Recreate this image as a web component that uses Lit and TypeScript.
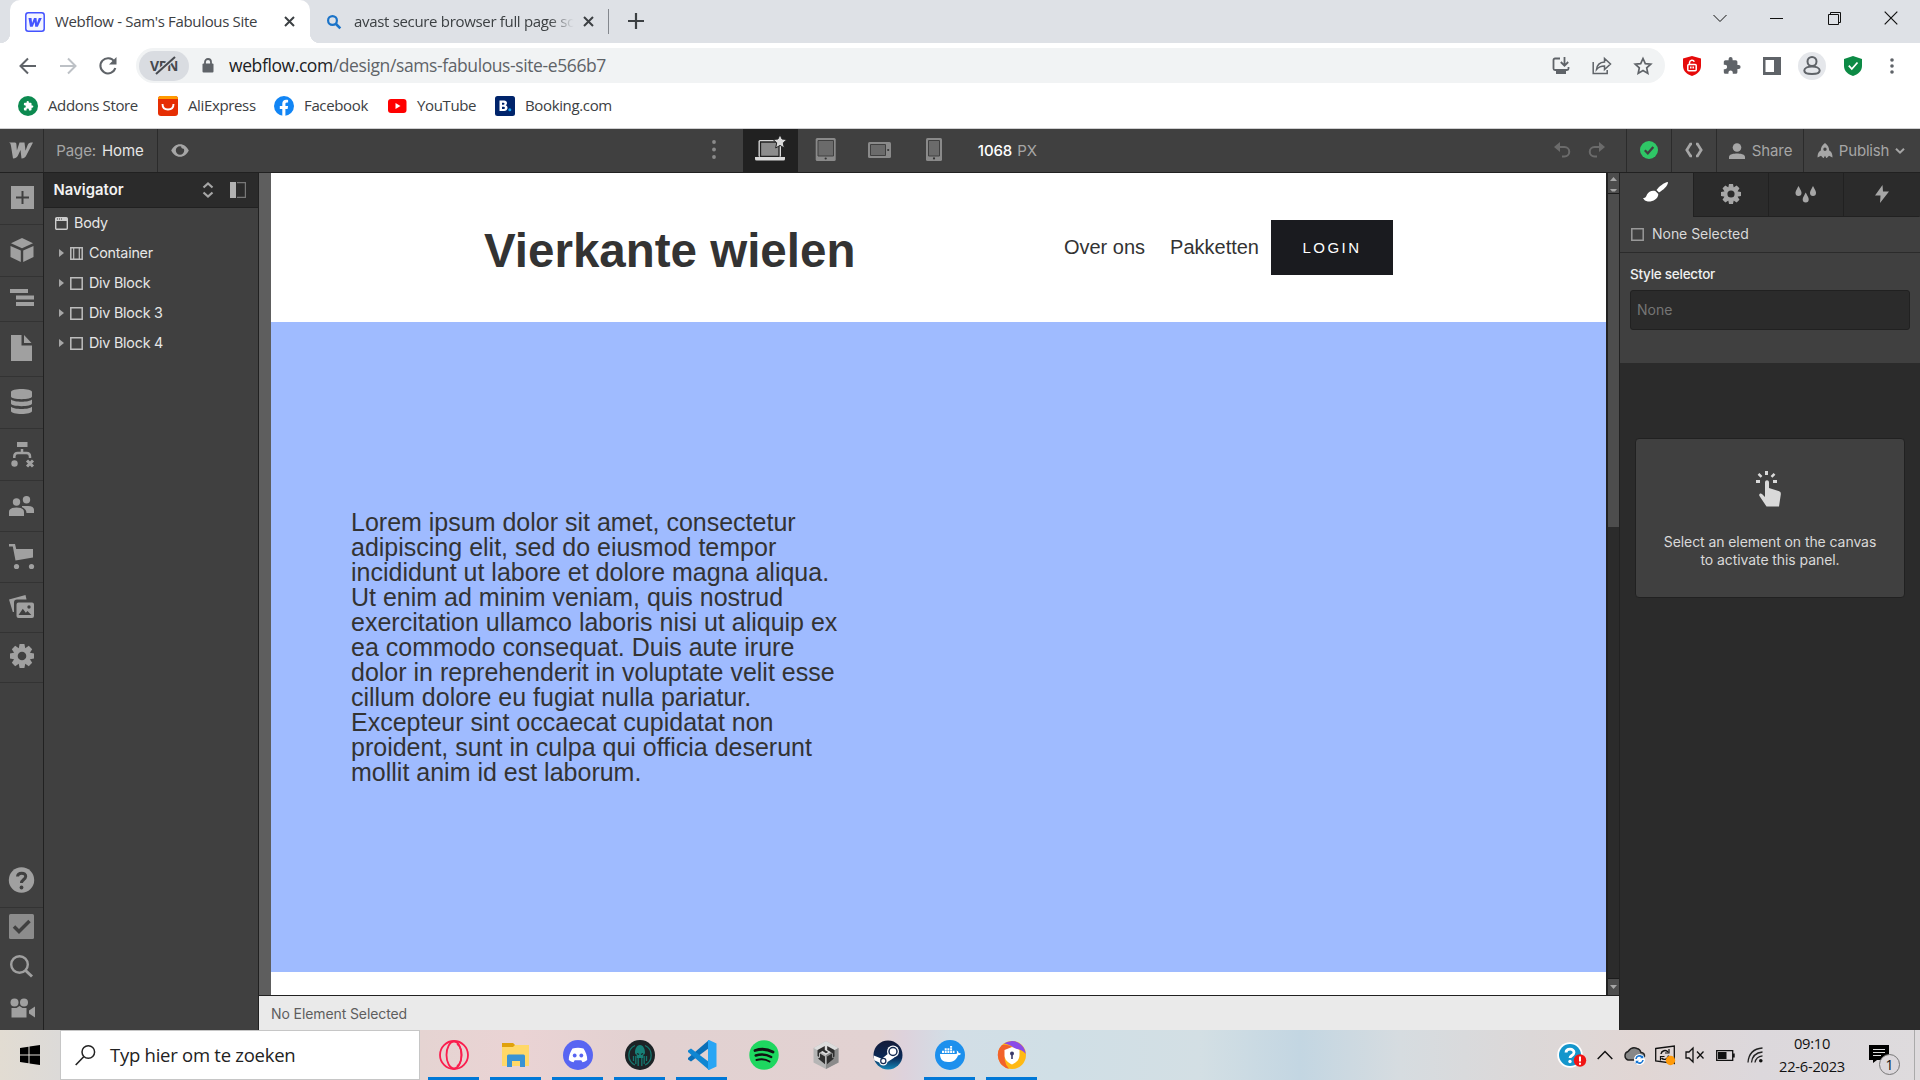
import { LitElement, html, svg, css } from "lit";
import { customElement } from "lit/decorators.js";

const ic = (w: number, h: number, body: unknown, cls = "") =>
  html`<svg class="ic ${cls}" width=${w} height=${h} viewBox="0 0 ${w} ${h}">${body}</svg>`;

const gear = (s: number, hole: string) => svg`
  <g transform="translate(${s / 2} ${s / 2}) scale(${s / 24})" fill="currentColor">
    ${[0, 45, 90, 135].map((a) => svg`<path transform="rotate(${a})" d="M-2.400-12h4.800l1 5h-6.800zM-2.400 12h4.800l1-5h-6.800z"/>`)}
    <circle r="8.300"/><circle r="4.300" fill=${hole}/>
  </g>`;

const puzzle = svg`<path fill="currentColor" d="M20.500 11H19V7a2 2 0 0 0-2-2h-4V3.500a2.500 2.500 0 0 0-5 0V5H4a2 2 0 0 0-2 2v3.800h1.500a2.700 2.700 0 0 1 0 5.400H2V20a2 2 0 0 0 2 2h3.800v-1.500a2.700 2.700 0 0 1 5.400 0V22H17a2 2 0 0 0 2-2v-4h1.500a2.500 2.500 0 0 0 0-5z"/>`;

@customElement("browser-chrome")
export class BrowserChrome extends LitElement {
  static styles = css`
    :host { display: flex; flex-direction: column; height: 129px; background: #fff; font-family: "Open Sans", "Noto Sans", sans-serif; color: #3c4043; box-sizing: border-box; border-bottom: 1px solid #cfcfd1; }
    .ic { display: block; flex: none; overflow: visible; }
    .strip { height: 43px; background: #dee1e6; display: flex; align-items: stretch; flex: none; }
    .tab { width: 300px; margin-left: 10px; box-sizing: border-box; background: #fff; border-radius: 10px 10px 0 0; display: flex; align-items: center; padding: 0 15px 0 15px; position: relative; }
    .tab::before, .tab::after { content: ""; position: absolute; bottom: 0; width: 10px; height: 10px; }
    .tab::before { left: -10px; background: radial-gradient(circle at 0 0, transparent 10px, #fff 10.500px); }
    .tab::after { right: -10px; background: radial-gradient(circle at 100% 0, transparent 10px, #fff 10.500px); }
    .tab.idle { background: none; padding: 0 14px 0 17px; margin-left: 0; width: 298px; }
    .tab.idle::before, .tab.idle::after { display: none; }
    .title { font-size: 15px; line-height: 20px; white-space: nowrap; flex: 1; margin: 0 12px 2px 10px; letter-spacing: -0.330px; }
    .idle .title { margin: 0 7px 2px 13px; letter-spacing: -0.320px; -webkit-mask-image: linear-gradient(to right, #000 88%, transparent 99%); mask-image: linear-gradient(to right, #000 88%, transparent 99%); }
    .sep { width: 1px; height: 25px; background: #83878d; align-self: center; }
    .plus { margin: 13px 0 0 19px; }
    .grow { flex: 1; }
    .win { display: flex; align-items: center; padding: 0 22px 7px 0; gap: 43px; color: #111; }
    .bar { height: 43px; display: flex; align-items: center; padding-left: 18px; margin-top: 1px; color: #5f6368; flex: none; }
    .bar > .ic { margin-right: 20px; }
    .omni { width: 1529px; height: 35px; border-radius: 18px; background: #f1f3f4; display: flex; align-items: center; box-sizing: border-box; padding: 0 13px 0 3px; margin-left: -2px; }
    .vpn { width: 50px; height: 30px; border-radius: 15px; background: #d9dce1; display: flex; align-items: center; justify-content: center; position: relative; font-size: 14px; font-weight: 700; letter-spacing: -0.500px; color: #46494e; }
    .slash { position: absolute; left: 13px; top: 5px; }
    .lock { margin: 0 15px 0 13px; }
    .url { font-size: 17.500px; line-height: 24px; letter-spacing: -0.400px; white-space: nowrap; color: #5f6368; margin-bottom: 1px; }
    .url b { font-weight: 400; color: #202124; }
    .acts { display: flex; align-items: center; gap: 22px; }
    .exts { display: flex; align-items: center; gap: 22px; padding-left: 18px; }
    .exts > :last-child { margin-left: -1px; }
    .ava { width: 28px; height: 28px; border-radius: 50%; background: #e5e7eb; display: flex; align-items: center; justify-content: center; margin: 0 -4px 0 -5px; }
    .marks { display: flex; align-items: center; height: 38px; padding-left: 18px; }
    .mark { display: flex; align-items: center; gap: 10px; font-size: 15px; letter-spacing: -0.360px; height: 24px; white-space: nowrap; box-sizing: border-box; }
    .m0 { width: 140px; } .m1 { width: 116px; } .m2 { width: 114px; } .m3 { width: 107px; }
    .mark span { margin-bottom: 2px; }
  `;
  render() {
    const x = svg`<path d="M1 1l9 9M10 1l-9 9" stroke="#3c4043" stroke-width="2" fill="none"/>`;
    return html`
      <div class="strip">
        <div class="tab">
          ${ic(20, 20, svg`<rect x=".8" y=".8" width="18.400" height="18.400" rx="2.500" fill="#f4f5ff" stroke="#4353ff" stroke-width="1.500"/><path fill="#4353ff" d="M3.500 6h3l.6 5L9 6h2.500l.5 5 1.800-5h3l-4 8.800h-2.600L9.700 10l-2 4.800H5z"/>`)}
          <span class="title">Webflow - Sam's Fabulous Site</span>
          ${ic(11, 11, x)}
        </div>
        <div class="tab idle">
          ${ic(14, 14, svg`<circle cx="5.500" cy="5.500" r="4.400" fill="none" stroke="#1a73c8" stroke-width="2.200"/><path d="M9 9l4.300 4.300" stroke="#1a73c8" stroke-width="2.600"/>`)}
          <span class="title">avast secure browser full page sc</span>
          ${ic(11, 11, x)}
        </div>
        <div class="sep"></div>
        ${ic(16, 16, svg`<path d="M8 0v16M0 8h16" stroke="#3c4043" stroke-width="2.200"/>`, "plus")}
        <div class="grow"></div>
        <div class="win">
          ${ic(14, 14, svg`<path d="M.5 4l6.500 6.500L13.500 4" stroke="currentColor" fill="none"/>`)}
          ${ic(14, 14, svg`<path d="M0 7.500h13" stroke="currentColor"/>`)}
          ${ic(14, 14, svg`<path d="M1.500 3.500h10v10h-10zM3.500 3V1.500h10v10H12" stroke="currentColor" fill="none"/>`)}
          ${ic(14, 14, svg`<path d="M.7 .7l12.600 12.600M13.300 .7L.7 13.300" stroke="currentColor" stroke-width="1.200"/>`)}
        </div>
      </div>
      <div class="bar">
        ${ic(20, 20, svg`<path d="M18 10H3M10 2.500L2.500 10l7.500 7.500" fill="none" stroke="currentColor" stroke-width="2"/>`)}
        ${ic(20, 20, svg`<path d="M2 10h15M10 2.500l7.500 7.500-7.500 7.500" fill="none" stroke="#bdc1c6" stroke-width="2"/>`)}
        ${ic(20, 20, svg`<path d="M16.300 5.500A7.600 7.600 0 1 0 17.300 12" fill="none" stroke="currentColor" stroke-width="2.100"/><path d="M18.500 1v7.500H11z" fill="currentColor"/>`)}
        <div class="omni">
          <div class="vpn">VPN${ic(26, 20, svg`<path d="M3 19L23 1" stroke="#d9dce1" stroke-width="4.500"/><path d="M4 18L23 1" stroke="#46494e" stroke-width="2"/>`, "slash")}</div>
          ${ic(12, 15, svg`<rect x="0.500" y="5.500" width="11" height="9" rx="1" fill="currentColor"/><path d="M3 6V4a3 3 0 0 1 6 0v2" fill="none" stroke="currentColor" stroke-width="1.800"/>`, "lock")}
          <span class="url"><b>webflow.com</b>/design/sams-fabulous-site-e566b7</span>
          <div class="grow"></div>
          <div class="acts">
            ${ic(18, 18, svg`<path d="M8 1.500H3a1.500 1.500 0 0 0-1.500 1.500v8.500A1.500 1.500 0 0 0 3 13h12a1.500 1.500 0 0 0 1.500-1.500V10" fill="none" stroke="currentColor" stroke-width="1.800"/><path d="M4 14h10v3H4z" fill="currentColor"/><path d="M12.500 0v8M8.800 5l3.700 3.700L16.200 5" fill="none" stroke="currentColor" stroke-width="1.800"/>`)}
            ${ic(20, 18, svg`<path d="M1.200 5v11.500h14V13" fill="none" stroke="currentColor" stroke-width="1.500"/><path d="M4.500 12.500C5 8 8 5.300 12.500 5V1.500l6 5.500-6 5.500V9C9 9 6.500 10 4.500 12.500z" fill="none" stroke="currentColor" stroke-width="1.500"/>`)}
            ${ic(18, 18, svg`<path d="M9 1.500l2.300 5.100 5.500.6-4.100 3.700 1.100 5.500L9 13.600l-4.800 2.800 1.100-5.500L1.200 7.200l5.500-.6z" fill="none" stroke="currentColor" stroke-width="1.700"/>`)}
          </div>
        </div>
        <div class="exts">
          ${ic(18, 20, svg`<path d="M9 0l9 2.500V10c0 5-4 8.500-9 10-5-1.500-9-5-9-10V2.500z" fill="#e60a0a"/><rect x="4.800" y="8.500" width="8.400" height="6.200" rx="1" fill="none" stroke="#fff" stroke-width="1.500"/><path d="M6.500 8V6.500a2.500 2.500 0 0 1 4.800-.7M7.800 10.500v2M10.200 10.500v2" fill="none" stroke="#fff" stroke-width="1.500"/>`)}
          ${ic(18, 18, svg`<g transform="scale(.8) translate(-1 -1)">${puzzle}</g>`)}
          ${ic(18, 18, svg`<path d="M0 0h18v18H0z" fill="currentColor"/><path d="M2.500 3h8.500v12H2.500z" fill="#fff"/>`)}
          <div class="ava">${ic(18, 19, svg`<circle cx="9" cy="5.500" r="4.500" fill="none" stroke="currentColor" stroke-width="2"/><path d="M1.300 14.500c0-2.500 3.500-4 7.700-4s7.700 1.500 7.700 4S14 18 9 18s-7.700-1-7.700-3.500z" fill="none" stroke="currentColor" stroke-width="2"/>`)}</div>
          ${ic(18, 20, svg`<path d="M9 0l9 3v7c0 5-4 8.500-9 10-5-1.500-9-5-9-10V3z" fill="#0c8a45"/><path d="M4.800 9.700l3 3.300 5.700-6.500" fill="none" stroke="#fff" stroke-width="1.800"/>`)}
          ${ic(18, 18, svg`<g fill="currentColor"><circle cx="9" cy="3" r="1.800"/><circle cx="9" cy="9" r="1.800"/><circle cx="9" cy="15" r="1.800"/></g>`)}
        </div>
      </div>
      <div class="marks">
        <div class="mark m0">${ic(20, 20, svg`<circle cx="10" cy="10" r="10" fill="#0c8a50"/><g transform="translate(5 4.500) scale(.45)" color="#fff">${puzzle}</g>`)}<span>Addons Store</span></div>
        <div class="mark m1">${ic(20, 20, svg`<rect width="20" height="20" rx="3" fill="#e62e04"/><path d="M0 3a3 3 0 0 1 3-3h14a3 3 0 0 1 3 3z" fill="#ff9a00"/><path d="M4.500 8c0 3.500 2.300 5.500 5.500 5.500s5.500-2 5.500-5.500" fill="none" stroke="#fff" stroke-width="1.900"/>`)}<span>AliExpress</span></div>
        <div class="mark m2">${ic(20, 20, svg`<circle cx="10" cy="10" r="10" fill="#1185f5"/><path d="M8.300 20v-7H5.800v-3h2.500V7.800c0-2.600 1.500-4 3.800-4 1 0 2 .2 2 .2v2.500h-1.200c-1.200 0-1.500.8-1.500 1.500v2h2.700l-.5 3h-2.200v7z" fill="#fff"/>`)}<span>Facebook</span></div>
        <div class="mark m3">${ic(19, 14, svg`<rect width="18.500" height="14" rx="3" fill="#f00"/><path d="M7.500 4v6l5-3z" fill="#fff"/>`)}<span>YouTube</span></div>
        <div class="mark">${ic(20, 20, svg`<rect width="20" height="20" rx="2.500" fill="#00246b"/><path d="M4.500 4.500h4.700c3.300 0 3.500 4 1.500 4.800 2.800.8 2.500 5.700-1.500 5.700H4.500zM7 6.700v2h1.500c1.300 0 1.300-2 0-2zM7 10.700V13h1.800c1.500 0 1.500-2.300 0-2.300z" fill="#fff" fill-rule="evenodd"/><circle cx="14.800" cy="13.700" r="1.500" fill="#1ba5f0"/>`)}<span>Booking.com</span></div>
      </div>`;
  }
}

@customElement("designer-bar")
export class DesignerBar extends LitElement {
  static styles = css`
    :host { display: flex; height: 44px; box-sizing: border-box; background: #404040; border-bottom: 1px solid #212121; font: 15px/20px Inter, sans-serif; letter-spacing: -0.100px; color: #a6a6a6; }
    .ic { display: block; flex: none; overflow: visible; }
    .cell { display: flex; align-items: center; justify-content: center; box-sizing: border-box; border-right: 1px solid #2b2b2b; }
    .logo { width: 44px; padding: 0 2px 1px 0; }
    .page { width: 114px; gap: 6px; padding-right: 1px; } .page b { font-weight: 400; color: #e6e6e6; }
    .eye { width: 44px; border: 0; }
    .grow { flex: 1; }
    .dots { width: 60px; margin-left: 481px; border: 0; color: #8a8a8a; padding: 0 0 2px 2px; }
    .dev { width: 54.700px; border: 0; color: #8a8a8a; padding-bottom: 2px; }
    .on { background: #212121; color: #d9d9d9; padding-bottom: 5px; }
    .size { border: 0; padding-left: 16px; gap: 5px; } .size b { font-weight: 500; color: #fff; }
    .hist { gap: 19px; color: #6b6b6b; padding: 0 9px 2px 0; width: 85px; }
    .sq { width: 45px; padding-bottom: 1px; }
    .share { width: 87px; gap: 7px; padding-left: 1px; }
    .pub { width: 116px; border: 0; gap: 6px; letter-spacing: -0.200px; padding-right: 2px; }
  `;
  render() {
    return html`
      <div class="cell logo">${ic(24, 17, svg`<path fill="currentColor" d="M0 .5h5.800c1.500 0 1.500 1 1.600 2l.5 6L10.500.5h5l1 8.300L18.700 3C19.500 1 20.600.5 24 .5L17.500 13c-1 2-2.200 3.500-5 3.500l-1-8.500-2.300 5c-1 2-2.400 3.500-5.200 3.500L2 4C1.700 2 1.300.8 0 .5z"/>`)}</div>
      <div class="cell page">Page: <b>Home</b></div>
      <div class="cell eye">${ic(18, 13, svg`<path fill="currentColor" fill-rule="evenodd" d="M9 .2c4 0 7 2.600 8.800 6.300C16 10.200 13 12.800 9 12.800S2 10.200.2 6.500C2 2.800 5 .2 9 .2zM9 2.300a4.200 4.200 0 1 0 4.200 4.200c0-.6-.1-1.200-.4-1.800a2 2 0 0 1-2.600-2.200A4 4 0 0 0 9 2.300z"/>`)}</div>
      <div class="cell dots">${ic(4, 19, svg`<g fill="currentColor"><circle cx="2" cy="2" r="1.900"/><circle cx="2" cy="9.500" r="1.900"/><circle cx="2" cy="17" r="1.900"/></g>`)}</div>
      <div class="cell dev on">${ic(31, 26, svg`<rect x="3.500" y="5" width="22.500" height="17" rx="1.500" fill="currentColor"/><path d="M5.500 7h18.500v14.500H5.500z" fill="#8c8c8c" stroke="#212121" stroke-width="1.300"/><path d="M0 22h30v2a1.500 1.500 0 0 1-1.500 1.500h-27A1.500 1.500 0 0 1 0 24z" fill="currentColor"/><path d="M25 -.5l2 4.500 5 .5-3.700 3.300 1 5.200-4.300-2.600-4.300 2.600 1-5.200L18 4.500l5-.5z" fill="currentColor" stroke="#212121" stroke-width="1"/>`)}</div>
      <div class="cell dev">${ic(21, 23, svg`<rect x=".7" y="0" width="20" height="23" rx="1.500" fill="#8a8a8a"/><path d="M3 2.500h15.500v15.500H3z" fill="#6b6b6b" stroke="#404040"/><circle cx="10.700" cy="20.500" r="1.100" fill="#333"/>`)}</div>
      <div class="cell dev">${ic(23, 16, svg`<rect width="23" height="16" rx="1.500" fill="#8a8a8a"/><path d="M2.500 2.500h15v11h-15z" fill="#6b6b6b" stroke="#404040"/><circle cx="20.200" cy="8" r="1.100" fill="#333"/>`)}</div>
      <div class="cell dev">${ic(16, 23, svg`<rect width="16" height="23" rx="1.500" fill="#8a8a8a"/><path d="M2.500 2.500h11v15.500h-11z" fill="#6b6b6b" stroke="#404040"/><circle cx="8" cy="20.400" r="1.100" fill="#333"/>`)}</div>
      <div class="cell size"><b>1068</b> PX</div>
      <div class="grow"></div>
      <div class="cell hist">
        ${ic(16, 16, svg`<path d="M2 5h8.500a4.700 4.700 0 0 1 0 9.500H8" fill="none" stroke="currentColor" stroke-width="2"/><path d="M6 0v10L0 5z" fill="currentColor"/>`)}
        ${ic(16, 16, svg`<path d="M14 5H5.500a4.700 4.700 0 0 0 0 9.500H8" fill="none" stroke="currentColor" stroke-width="2"/><path d="M10 0v10l6-5z" fill="currentColor"/>`)}
      </div>
      <div class="cell sq">${ic(18, 18, svg`<circle cx="9" cy="9" r="9" fill="#2fc666"/><path d="M4.800 9.300l3 3L13.300 6" fill="none" stroke="#404040" stroke-width="2.300"/>`)}</div>
      <div class="cell sq">${ic(18, 14, svg`<path d="M7 1H5.500L1.800 7l3.700 6H7M11 1h1.500l3.700 6-3.700 6H11" fill="none" stroke="currentColor" stroke-width="2.700"/>`)}</div>
      <div class="cell share">${ic(16, 16, svg`<circle cx="8" cy="4.500" r="4.300" fill="currentColor"/><path d="M0 16v-2c0-3 5-3.500 8-3.500s8 .5 8 3.500v2z" fill="currentColor"/>`)}Share</div>
      <div class="cell pub">${ic(16, 15, svg`<path fill="currentColor" fill-rule="evenodd" d="M8 0c3 2 4.200 5 4.200 7.500 2.300 1 3.300 3.500 3.300 7L12 12.800 9.800 15h-.5L8 12.800 6.700 15h-.5L4 12.800.5 14.500c0-3.500 1-6 3.300-7C3.800 5 5 2 8 0zm0 4.500a1.700 1.700 0 1 0 0 3.400 1.700 1.700 0 0 0 0-3.400z"/>`)}Publish${ic(10, 6, svg`<path d="M1 .7l4 4 4-4" fill="none" stroke="currentColor" stroke-width="2"/>`)}</div>`;
  }
}

@customElement("tool-rail")
export class ToolRail extends LitElement {
  static styles = css`
    :host { display: flex; flex-direction: column; width: 44px; box-sizing: border-box; border-right: 1px solid #212121; background: #404040; color: #a0a0a0; }
    .ic { display: block; overflow: visible; }
    .it { display: flex; align-items: center; justify-content: center; box-sizing: border-box; border-bottom: 1px solid #333; padding-bottom: 1px; }
    .nb { border: 0; padding-bottom: 2px; }
    .up { padding-bottom: 3px; }
    .plus { padding: 0 0 2px 2px; }
    .grow { flex: 1; }
    .h52 { height: 52px; } .h51 { height: 51px; } .h50 { height: 50px; } .h49 { height: 49px; } .h45 { height: 45px; } .h55 { height: 55px; } .h38 { height: 38px; } .h42 { height: 42px; }
  `;
  render() {
    return html`
      <div class="it h52 plus">${ic(23, 23, svg`<path d="M0 0h23v23H0z" fill="currentColor"/><path d="M11.500 5v13M5 11.500h13" stroke="#404040" stroke-width="2"/>`)}</div>
      <div class="it h52">${ic(24, 24, svg`<g fill="currentColor"><path d="M12 0l11 5.300-11 5-11-5z"/><path d="M.5 8l10.300 4.500V24L.5 19zM23.500 8l-10.300 4.500V24l10.300-5z"/></g>`)}</div>
      <div class="it h45 up">${ic(24, 17, svg`<g fill="currentColor"><path d="M0 0h18v4H0zM6 6.500h18v4H6zM6 13h18v4H6z"/></g>`)}</div>
      <div class="it h55 up">${ic(21, 26, svg`<g fill="currentColor"><path d="M0 0h10.500v10.500H21V26H0z"/><path d="M13 0l7.500 8H13z"/></g>`)}</div>
      <div class="it h52 up">${ic(21, 25, svg`<g fill="currentColor"><path d="M0 3c0-4 21-4 21 0v4.500c0 3.500-21 3.500-21 0z"/><path d="M0 10.500c3 3 18 3 21 0v4c0 3.500-21 3.500-21 0z"/><path d="M0 17.800c3 3 18 3 21 0V22c0 4-21 4-21 0z"/></g>`)}</div>
      <div class="it h52">${ic(22, 25, svg`<g fill="currentColor"><path d="M6 0h10.500v5H6z"/><circle cx="3.500" cy="21.500" r="3.200"/></g><path d="M11 7v4M3.300 16v-1.500q0-3.500 3.500-3.500h8.700q3.500 0 3.500 3.500V16" fill="none" stroke="currentColor" stroke-width="2.500"/><path d="M16 18.500l6 6M22 18.500l-6 6" stroke="currentColor" stroke-width="3"/>`)}</div>
      <div class="it h51">${ic(25, 20, svg`<g fill="currentColor"><circle cx="7.500" cy="6" r="3.700"/><circle cx="17.500" cy="3.800" r="3.700"/><path d="M0 20v-4c0-3 3-4.500 7.500-4.500S15 13 15 16v4zM13 10h6c4 0 6 1.500 6 4v3h-7.500c-.3-3-1.500-4.500-4.500-5.700z"/></g>`)}</div>
      <div class="it h51">${ic(25, 25, svg`<g fill="currentColor"><path d="M0 0h6l1.200 5H24v8.500L6.500 16.500 3.800 2.500H0z"/><circle cx="7.500" cy="22.500" r="2.600"/><circle cx="22.500" cy="22.500" r="2.600"/></g>`)}</div>
      <div class="it h50 up">${ic(25, 23, svg`<g fill="currentColor"><path d="M0 4.500L16.500 0l1 4.500H8q-3 0-3 3V17H3.800z"/><path fill-rule="evenodd" d="M9.500 7.500H23a2 2 0 0 1 2 2V21a2 2 0 0 1-2 2H9.500a2 2 0 0 1-2-2V9.500a2 2 0 0 1 2-2zM9.500 20h12.800l-3.800-4-1.700 1.700-3-4zM20 10.300a1.700 1.700 0 1 0 0 3.400 1.700 1.700 0 0 0 0-3.400z"/></g>`)}</div>
      <div class="it h50 up">${ic(24, 24, gear(24, "#404040"))}</div>
      <div class="grow"></div>
      <div class="it h55">${ic(25, 26, svg`<circle cx="12.500" cy="13" r="12.700" fill="currentColor"/><path d="M8.500 9.500c.3-4.500 8.500-4.500 8.200 0-.1 3-4.200 3-4.200 6.500" fill="none" stroke="#404040" stroke-width="3"/><circle cx="12.500" cy="20.500" r="1.900" fill="#404040"/>`)}</div>
      <div class="it h38 nb">${ic(25, 25, svg`<rect width="25" height="25" rx="1.500" fill="#8c8c8c"/><path d="M5 12.500l5 5 10.500-10.500" fill="none" stroke="#404040" stroke-width="3.500"/>`)}</div>
      <div class="it h42 nb">${ic(23, 22, svg`<circle cx="9.500" cy="9.500" r="8.300" fill="none" stroke="currentColor" stroke-width="2.400"/><path d="M15 15l7 6.500" stroke="currentColor" stroke-width="3"/>`)}</div>
      <div class="it h42 nb">${ic(23, 20, svg`<g fill="currentColor"><circle cx="4.500" cy="4.500" r="4"/><circle cx="14" cy="4.500" r="4"/><path d="M1.500 10h5l3-2 3 2h4v9.500h-15zM19 12.500l6-4v11l-6-4z"/></g>`)}</div>`;
  }
}

@customElement("navigator-panel")
export class NavigatorPanel extends LitElement {
  static styles = css`
    :host { display: flex; flex-direction: column; width: 215px; box-sizing: border-box; border-right: 1px solid #212121; background: #404040; font: 14.300px/20px Inter, sans-serif; color: #e6e6e6; letter-spacing: -0.220px; }
    .ic { display: block; flex: none; }
    .head { height: 35px; box-sizing: border-box; background: #2b2b2b; border-bottom: 1px solid #212121; display: flex; align-items: center; padding: 0 12px 0 9.500px; font-weight: 600; font-size: 14.800px; color: #f2f2f2; letter-spacing: .05px; }
    .head span { flex: 1; }
    .a { margin-right: 16px; }
    .row { height: 30px; display: flex; align-items: center; padding-left: 15px; gap: 6px; }
    .body { padding-left: 11px; }
  `;
  render() {
    const rows = ["Container", "Div Block", "Div Block 3", "Div Block 4"];
    return html`
      <div class="head"><span>Navigator</span>
        ${ic(12, 16, svg`<path d="M1.500 5.500L6 1.500l4.500 4M1.500 10.500l4.500 4 4.500-4" fill="none" stroke="#a6a6a6" stroke-width="2.200"/>`, "a")}
        ${ic(16, 16, svg`<path d="M0 0h6v16H0z" fill="#b0b0b0"/><path d="M7 .6h8.400v14.800H7" fill="none" stroke="#777" stroke-width="1.200"/>`)}
      </div>
      <div class="row body">${ic(13, 13, svg`<rect x=".7" y=".7" width="11.600" height="11.600" rx="1" fill="none" stroke="#ccc" stroke-width="1.400"/><path d="M1 1h11v3H1z" fill="#ccc"/><path d="M2 2h1M4 2h1M6 2h1" stroke="#404040"/>`)}<span>Body</span></div>
      ${rows.map((r, i) => html`<div class="row">
        ${ic(5, 8, svg`<path d="M0 0l5 4-5 4z" fill="#a6a6a6"/>`)}
        ${ic(13, 13, svg`<path d="M.8 .8h11.400v11.400H.8z" fill="none" stroke="#bdbdbd" stroke-width="1.500"/>${i === 0 ? svg`<path d="M3.700 1v11M9.300 1v11" stroke="#bdbdbd" stroke-width="1.200"/>` : ""}`)}
        <span>${r}</span></div>`)}`;
  }
}

@customElement("site-canvas")
export class SiteCanvas extends LitElement {
  static styles = css`
    :host { display: flex; flex-direction: column; width: 1361px; font-family: "Liberation Sans", Arial, sans-serif; color: #333; }
    .main { flex: 1; display: flex; min-height: 0; }
    .gut { width: 12px; background: #5e5e5e; }
    .site { width: 1335px; background: #fff; display: flex; flex-direction: column; }
    .hdr { height: 149px; display: flex; align-items: center; padding: 0 213px 0 213px; flex: none; }
    h1 { margin: 0 auto 0 0; font-size: 47.500px; line-height: 55px; font-weight: 700; padding-top: 5px; }
    .lnk { font-size: 20px; line-height: 25px; margin-right: 25px; }
    .lnk + .lnk { margin-right: 12px; }
    .btn { width: 122px; height: 55px; background: #1a1b1f; color: #fff; font-size: 15px; letter-spacing: 2.500px; display: flex; align-items: center; justify-content: center; box-sizing: border-box; }
    .hero { height: 650px; box-sizing: border-box; background: #9fbbff; flex: none; padding: 188px 80px 0; }
    .hero p { margin: 0; width: 500px; font-size: 25px; line-height: 25px; white-space: pre; }
    .bar { width: 14px; box-sizing: border-box; display: flex; flex-direction: column; background: #2b2b2b; border-left: 2px solid #212121; border-right: 1px solid #212121; flex: none; }
    .up { height: 21px; box-sizing: border-box; background: #4d4d4d; border-bottom: 1px solid #1c1c1c; display: flex; flex-direction: column; align-items: center; justify-content: space-between; padding: 4px 0 1px; }
    .thumb { height: 333px; background: #4d4d4d; }
    .grow { flex: 1; }
    .dn { height: 17px; background: #4d4d4d; border-top: 1px solid #1c1c1c; display: flex; align-items: center; justify-content: center; box-sizing: border-box; }
    .ic { display: block; }
    .stat { height: 35px; box-sizing: border-box; border-top: 1px solid #212121; border-right: 1px solid #212121; background: #eaeaea; display: flex; align-items: center; padding: 2px 0 0 12px; font: 14px/20px Inter, sans-serif; letter-spacing: -0.100px; color: #5e5e5e; }
  `;
  render() {
    const lines = ["Lorem ipsum dolor sit amet, consectetur", "adipiscing elit, sed do eiusmod tempor", "incididunt ut labore et dolore magna aliqua.", "Ut enim ad minim veniam, quis nostrud", "exercitation ullamco laboris nisi ut aliquip ex", "ea commodo consequat. Duis aute irure", "dolor in reprehenderit in voluptate velit esse", "cillum dolore eu fugiat nulla pariatur.", "Excepteur sint occaecat cupidatat non", "proident, sunt in culpa qui officia deserunt", "mollit anim id est laborum."];
    return html`
      <div class="main">
        <div class="gut"></div>
        <div class="site">
          <div class="hdr"><h1>Vierkante wielen</h1><span class="lnk">Over ons</span><span class="lnk">Pakketten</span><div class="btn">LOGIN</div></div>
          <div class="hero"><p>${lines.join("\n")}</p></div>
        </div>
        <div class="bar">
          <div class="up">${ic(7, 4, svg`<path d="M0 4h7L3.500 0z" fill="#a6a6a6"/>`)}${ic(7, 3, svg`<path d="M0 0h7L5 2.500H2z" fill="#a6a6a6"/>`)}</div>
          <div class="thumb"></div><div class="grow"></div>
          <div class="dn">${ic(7, 4, svg`<path d="M0 0h7L3.500 4z" fill="#a6a6a6"/>`)}</div>
        </div>
      </div>
      <div class="stat">No Element Selected</div>`;
  }
}

@customElement("style-panel")
export class StylePanel extends LitElement {
  static styles = css`
    :host { display: flex; flex-direction: column; flex: 1; background: #2b2b2b; font: 14px/18px Inter, sans-serif; color: #d9d9d9; }
    .ic { display: block; overflow: visible; }
    .tabs { display: flex; height: 44px; flex: none; color: #a6a6a6; }
    .tab { width: 75px; box-sizing: border-box; border: solid #212121; border-width: 0 1px 1px 0; display: flex; align-items: center; justify-content: center; padding-bottom: 2px; }
    .on { background: #404040; color: #fff; border-bottom: 0; width: 74px; padding: 0 3px 6px 0; }
    .tab:last-child { border-right: 0; }
    .none { height: 36px; box-sizing: border-box; background: #404040; border-bottom: 1px solid #2b2b2b; display: flex; align-items: center; padding: 0 0 1px 11px; gap: 8px; letter-spacing: -.03px; }
    .sel { height: 110px; box-sizing: border-box; background: #404040; padding: 12px 10px 0; display: flex; flex-direction: column; gap: 7px; color: #f0f0f0; letter-spacing: -0.250px; font-weight: 500; font-size: 13.500px; }
    .inp { height: 40px; box-sizing: border-box; border: 1px solid #212121; border-radius: 3px; background: #2b2b2b; color: #757575; padding: 10px 6px; font-weight: 400; font-size: 14px; letter-spacing: 0; }
    .card { margin: 75px 15px 0; height: 160px; box-sizing: border-box; background: #404040; border: 1px solid #212121; border-radius: 4px; display: flex; flex-direction: column; align-items: center; padding-top: 32px; gap: 26px; text-align: center; letter-spacing: -0.080px; }
    .card .ic { margin-right: 2px; }
  `;
  render() {
    return html`
      <div class="tabs">
        <div class="tab on">${ic(25, 20, svg`<g fill="currentColor"><path d="M25 0c0 4-5 8-9 10.500L13.500 8C16 4.500 21 .5 25 0z"/><path d="M12.300 9l3 3c0 5-6 8-10.500 7.500C2.500 19.200 1 18 0 16c3 0 3-1.500 4-3.500 1.500-3 5-4.500 8.300-3.500z"/></g>`)}</div>
        <div class="tab">${ic(20, 20, gear(20, "#2b2b2b"))}</div>
        <div class="tab">${ic(22, 18, svg`<g fill="currentColor"><path d="M3.500 1c2 4 3 5 3 7a3 3 0 0 1-6 0c0-2 1-3 3-7zM18 1c2 4 3 5 3 7a3 3 0 0 1-6 0c0-2 1-3 3-7zM10.700 7.500c2 4 3 5 3 7a3 3 0 0 1-6 0c0-2 1-3 3-7z"/></g>`)}</div>
        <div class="tab">${ic(16, 18, svg`<path d="M8.500 0L1 10.500h5.500L6 18l9-11.500H9z" fill="currentColor"/>`)}</div>
      </div>
      <div class="none">${ic(13, 13, svg`<path d="M.8 .8h11.400v11.400H.8z" fill="none" stroke="#999" stroke-width="1.500"/>`)}<span>None Selected</span></div>
      <div class="sel"><span>Style selector</span><div class="inp">None</div></div>
      <div class="card">
        ${ic(26, 36, svg`<g fill="#d9d9d9"><path d="M9 11.500c0-3 4-3 4 0v5.500l9.500 3c2 .6 2.500 1.500 2.300 3.500L23 35.500H10.500L3.500 25c-1.200-2 1-3.500 2.500-2l3 3z"/><path d="M9 0h3v4H9zM0 9h4v3H0zM17 9h4v3h-4z"/></g><path d="M2.500 2.800l3 3M18.500 2.800l-3 3" stroke="#d9d9d9" stroke-width="2.500"/>`)}
        <div>Select an element on the canvas<br>to activate this panel.</div>
      </div>`;
  }
}

@customElement("task-bar")
export class TaskBar extends LitElement {
  static styles = css`
    :host { display: flex; height: 50px; font-family: "Open Sans", "Noto Sans", sans-serif; color: #111; background: linear-gradient(90deg, #e2dcd2 0, #dcdad8 60px, #e5d4d2 420px, #ead3d4 520px, #e2d1d1 640px, #e2d2d2 880px, #ddd2dc 905px, #d2dee6 950px, #d0dfe6 1060px, #d3dfe4 1200px, #c3d6e2 1300px, #d6dce0 1400px, #dcd8d8 1530px, #e1d6d4 1640px, #dcd8dc 1760px, #dedbdd 1920px); }
    .ic { display: block; flex: none; overflow: visible; }
    .start { width: 60px; display: flex; align-items: center; justify-content: center; }
    .search { width: 360px; box-sizing: border-box; border: 1px solid #c6c6c6; background: #fff; display: flex; align-items: center; padding-left: 14px; gap: 14px; font-size: 18.500px; letter-spacing: -0.260px; color: #222; }
    .search span { margin-bottom: 2px; }
    .apps { display: flex; gap: 11px; padding-left: 8px; }
    .app { width: 51px; box-sizing: border-box; display: flex; align-items: center; justify-content: center; border-bottom: 3px solid transparent; padding-top: 3px; }
    .run { border-color: #0078d7; }
    .grow { flex: 1; }
    .tray { display: flex; align-items: center; }
    .c { width: 30px; display: flex; justify-content: center; }
    .help { width: 38px; }
    .clock { width: 84px; display: flex; flex-direction: column; align-items: center; font-size: 14.700px; line-height: 23px; letter-spacing: -0.250px; white-space: nowrap; }
    .note { width: 60px; position: relative; height: 50px; }
    .note .ic { margin: 15px 0 0 15px; }
    .badge { position: absolute; left: 25px; top: 24px; width: 21px; height: 21px; box-sizing: border-box; border: 1px solid #777; border-radius: 50%; background: #dcd8dc; font-size: 14px; line-height: 19px; text-align: center; }
    .edge { width: 5px; height: 50px; border-left: 1px solid #aaa; }
  `;
  render() {
    const apps: [boolean, unknown][] = [
      [true, svg`<g fill="none" stroke="#fa1e4e"><circle cx="15" cy="15" r="14" stroke-width="1.800"/><ellipse cx="15" cy="15" rx="7.500" ry="13.500" stroke-width="1.800"/><path d="M18 4c6 3 6 19 0 22" stroke-width="1.600"/></g>`],
      [true, svg`<path d="M1 3h11l2 2h14v21H1z" fill="#ffd868"/><path d="M1 3h11l2 2-2 2H1z" fill="#e0a10b"/><path d="M6 27V16a1.500 1.500 0 0 1 1.500-1.500h15A1.500 1.500 0 0 1 24 16v11h-5v-6h-8v6z" fill="#3993d4"/>`],
      [true, svg`<circle cx="15" cy="15" r="15" fill="#5865f2"/><path d="M9.500 8.500Q15 7 20.500 8.500q4 6 3.700 11.500-2 1.700-4.700 2.200l-1.200-2h-6.600l-1.200 2Q7.800 21.700 5.800 20 5.500 14.500 9.500 8.500z" fill="#fff"/><ellipse cx="11.700" cy="15.500" rx="1.900" ry="2.100" fill="#5865f2"/><ellipse cx="18.300" cy="15.500" rx="1.900" ry="2.100" fill="#5865f2"/>`],
      [true, svg`<circle cx="15" cy="15" r="15" fill="#1c2326"/><g fill="none" stroke="#14776f" stroke-width="1.300"><path d="M10 5.500a10.800 10.800 0 0 0 0 19.500M20 5.500a10.800 10.800 0 0 1 0 19.500M8.500 21v-5M21.500 21v-5M13.200 26v-9M16.800 26v-9M10.800 24v-8M19.200 24v-8"/></g><path d="M15 5c3.500 0 5 4.500 5 7.500 0 1.500-1 2-1.700 2.500v3h-6.600v-3c-.7-.5-1.700-1-1.700-2.500 0-3 1.500-7.500 5-7.500z" fill="#178078"/><path d="M12 13.500l2 1M18 13.500l-2 1" stroke="#1c2326" stroke-width="1.300"/>`],
      [true, svg`<path d="M22 0v8L4 21.500 1 19.500v-1.500z" fill="#0a6fb8"/><path d="M22 30v-8L4 8.500 1 10.500V12z" fill="#0f86d2"/><path d="M22 0l7.500 3.500v23L22 30c-1 .3-1-.5-1-1V1c0-.5 0-1 1-1z" fill="#28a5f4"/>`],
      [false, svg`<circle cx="15" cy="15" r="14.700" fill="#1ed760"/><g fill="none" stroke="#111" stroke-linecap="round"><path d="M6 10.500c6-2 12.500-1.500 18 1.500" stroke-width="2.800"/><path d="M6.700 15.500c5-1.500 11-1 15.500 1.500" stroke-width="2.400"/><path d="M7.500 20c4.500-1.200 9-.8 13 1.500" stroke-width="2"/></g>`],
      [false, svg`<path d="M15 1l12.500 7v14.500L15 29 2.500 22.500V8z" fill="#b5b5b5"/><path d="M15 1l12.500 7L15 15 2.500 8z" fill="#ddd"/><path d="M15 15l12.500-7v14.500L15 29z" fill="#8b8b8b"/><path d="M13.800 6v4l3.400 2-2.200 1.200L11.500 11 8 13v4l-1.500-1V10zM16.200 6v4l2.300 1.200L22 13.500v4l1.500-1V10z" fill="#2e2e2e"/><path d="M7 18.500l3-1.500 4 2.500v4.700zM23 18.500l-3-1.500-4 2.500v4.700zM9 13.500l5 3v4l-5-3zM21 13.500l-5 3v4l5-3z" fill="#2e2e2e"/>`],
      [false, svg`<defs><linearGradient id="st" x2="0" y2="1"><stop stop-color="#131a38"/><stop offset=".6" stop-color="#0b2a57"/><stop offset="1" stop-color="#1387b8"/></linearGradient></defs><circle cx="15" cy="15" r="14.500" fill="url(#st)"/><path d="M.8 15.500l8 3.300L16 13l5.500 4.500-7 4.500a4.300 4.300 0 0 1-8.300.5L1.200 20.200z" fill="#fff"/><circle cx="20" cy="11.500" r="6" fill="#fff"/><circle cx="20" cy="11.500" r="4" fill="none" stroke="#142b52" stroke-width="1.500"/><circle cx="10.300" cy="21" r="2.600" fill="none" stroke="#142b52" stroke-width="1.200"/>`],
      [true, svg`<circle cx="15" cy="15" r="15" fill="#1d90ed"/><path d="M5 14h16.500c.8-1 .5-2.500 0-3.500 1.500.3 2 1.500 2.200 2.500 1 0 1.800.2 2.300.7-.7 1.300-2 1.500-3 1.500C21.500 20 18 22 13 22c-5.500 0-8-3-8-8z" fill="#fff"/><path d="M7 10.800h2v2.200H7zM9.700 10.800h2v2.200h-2zM12.400 10.800h2v2.200h-2zM15.100 10.800h2v2.200h-2zM17.800 10.800h1.700v2.200h-1.700zM9.700 8.300h2v2h-2zM12.400 8.300h2v2h-2zM15.100 8.300h2v2h-2zM15.100 6h2v1.800h-2z" fill="#fff"/>`],
      [true, svg`<circle cx="15" cy="15" r="14" fill="#ffb914"/><path d="M5 5a14 14 0 0 0 7 23.700Q5 21 9 11l8-2Q12 4 5 5z" fill="#f2622a"/><path d="M7 3.500A14 14 0 0 1 28.800 14Q25 9 18 9 14 4.500 7 3.500z" fill="#8b4be8"/><path d="M15 7l7.500 3v5c0 4.500-3 7.500-7.500 9.500-4.500-2-7.500-5-7.500-9.500v-5z" fill="#fff"/><circle cx="15" cy="13.500" r="2" fill="#3a3a6a"/><path d="M14.200 14h1.600v5h-1.600z" fill="#3a3a6a"/>`],
    ];
    return html`
      <div class="start">${ic(20, 20, svg`<path d="M0 3l8.500-1.200v7.700H0zM9.500 1.600L20 0v9.500H9.500zM0 10.500h8.500v7.700L0 17zM9.500 10.500H20V20L9.500 18.500z" fill="#000"/>`)}</div>
      <div class="search">${ic(21, 21, svg`<circle cx="13.300" cy="7" r="6.300" fill="none" stroke="#222" stroke-width="1.500"/><path d="M8.700 11.700L.7 20" stroke="#222" stroke-width="1.600"/>`)}<span>Typ hier om te zoeken</span></div>
      <div class="apps">${apps.map(([r, b]) => html`<div class="app ${r ? "run" : ""}">${ic(30, 30, b)}</div>`)}</div>
      <div class="grow"></div>
      <div class="tray">
        <div class="c help">${ic(28, 28, svg`<circle cx="13" cy="14" r="12.800" fill="#fff"/><circle cx="13" cy="14" r="11" fill="#1496cc"/><path d="M9 11.500c.2-4.500 8.200-4.300 8 0-.1 3-4 3-4 5.500" fill="none" stroke="#fff" stroke-width="2.800"/><circle cx="13" cy="20.500" r="1.700" fill="#fff"/><circle cx="23" cy="19.500" r="6.200" fill="#f01414"/><path d="M23 15.500v5M23 21.800v2" stroke="#fff" stroke-width="2"/>`)}</div>
        <div class="c">${ic(16, 10, svg`<path d="M.7 9L8 1.500 15.300 9" fill="none" stroke="#111" stroke-width="1.500"/>`)}</div>
        <div class="c">${ic(20, 20, svg`<path d="M3 15a4.500 4.500 0 0 1 0-8.500Q7 1 12 3.500q3 .5 4 4 4 .5 3.500 4-.5 3.500-4 3.500z" fill="#888" stroke="#222" stroke-width="1.400"/><circle cx="14.500" cy="14.500" r="5.500" fill="#fff"/><path d="M11 14a3.500 3.500 0 0 1 6-2M18 15a3.500 3.500 0 0 1-6 2" fill="none" stroke="#1573d1" stroke-width="1.600"/><path d="M18.300 10v3.300H15zM10.700 19v-3.300H14z" fill="#1573d1"/>`)}</div>
        <div class="c">${ic(20, 20, svg`<path d="M.7 3.500L19.300 1v17.500L.7 16z" fill="none" stroke="#111" stroke-width="1.300"/><path d="M6 9a4 4 0 0 1 7-2M13.500 10.500a4 4 0 0 1-7 2.500" fill="none" stroke="#111" stroke-width="1.400"/><path d="M14 4v4h-4M5.500 15.500v-4h4" fill="none" stroke="#111" stroke-width="1.200"/><circle cx="15.500" cy="15.500" r="4.700" fill="#ff9a0a"/>`)}</div>
        <div class="c">${ic(20, 16, svg`<path d="M1 5h3l4-4v14l-4-4H1z" fill="none" stroke="#111" stroke-width="1.300"/><path d="M12 4.500l6.500 7M18.500 4.500l-6.500 7" stroke="#111" stroke-width="1.300"/>`)}</div>
        <div class="c">${ic(19, 11, svg`<path d="M.7 .7h16v9.600h-16z" fill="none" stroke="#111" stroke-width="1.300"/><path d="M2 2h8.500v7H2zM17 3.500h1.700v4H17z" fill="#111"/>`)}</div>
        <div class="c">${ic(16, 16, svg`<g fill="none" stroke="#222" stroke-width="1.300"><path d="M1 15.500Q2 2 15.500 1"/><path d="M4.500 15.500Q5.500 6 15.500 5"/><path d="M8 15.500q1-6 7.500-6.700"/></g><circle cx="13.800" cy="13.800" r="1.800" fill="#111"/>`)}</div>
        <div class="clock"><span>09:10</span><span>22-6-2023</span></div>
        <div class="note">${ic(20, 18, svg`<path d="M0 0h20v15H8l-4 3v-3H0z" fill="#000"/><path d="M4 4.500h12M4 7.500h12M4 10.500h8" stroke="#ddd"/>`)}<div class="badge">1</div></div>
        <div class="edge"></div>
      </div>`;
  }
}

@customElement("app-root")
export class AppRoot extends LitElement {
  static styles = css`
    :host { display: flex; flex-direction: column; width: 1920px; height: 1080px; overflow: hidden; }
    .work { flex: 1; display: flex; min-height: 0; }
  `;
  render() {
    return html`<browser-chrome></browser-chrome><designer-bar></designer-bar>
      <div class="work"><tool-rail></tool-rail><navigator-panel></navigator-panel><site-canvas></site-canvas><style-panel></style-panel></div>
      <task-bar></task-bar>`;
  }
}
